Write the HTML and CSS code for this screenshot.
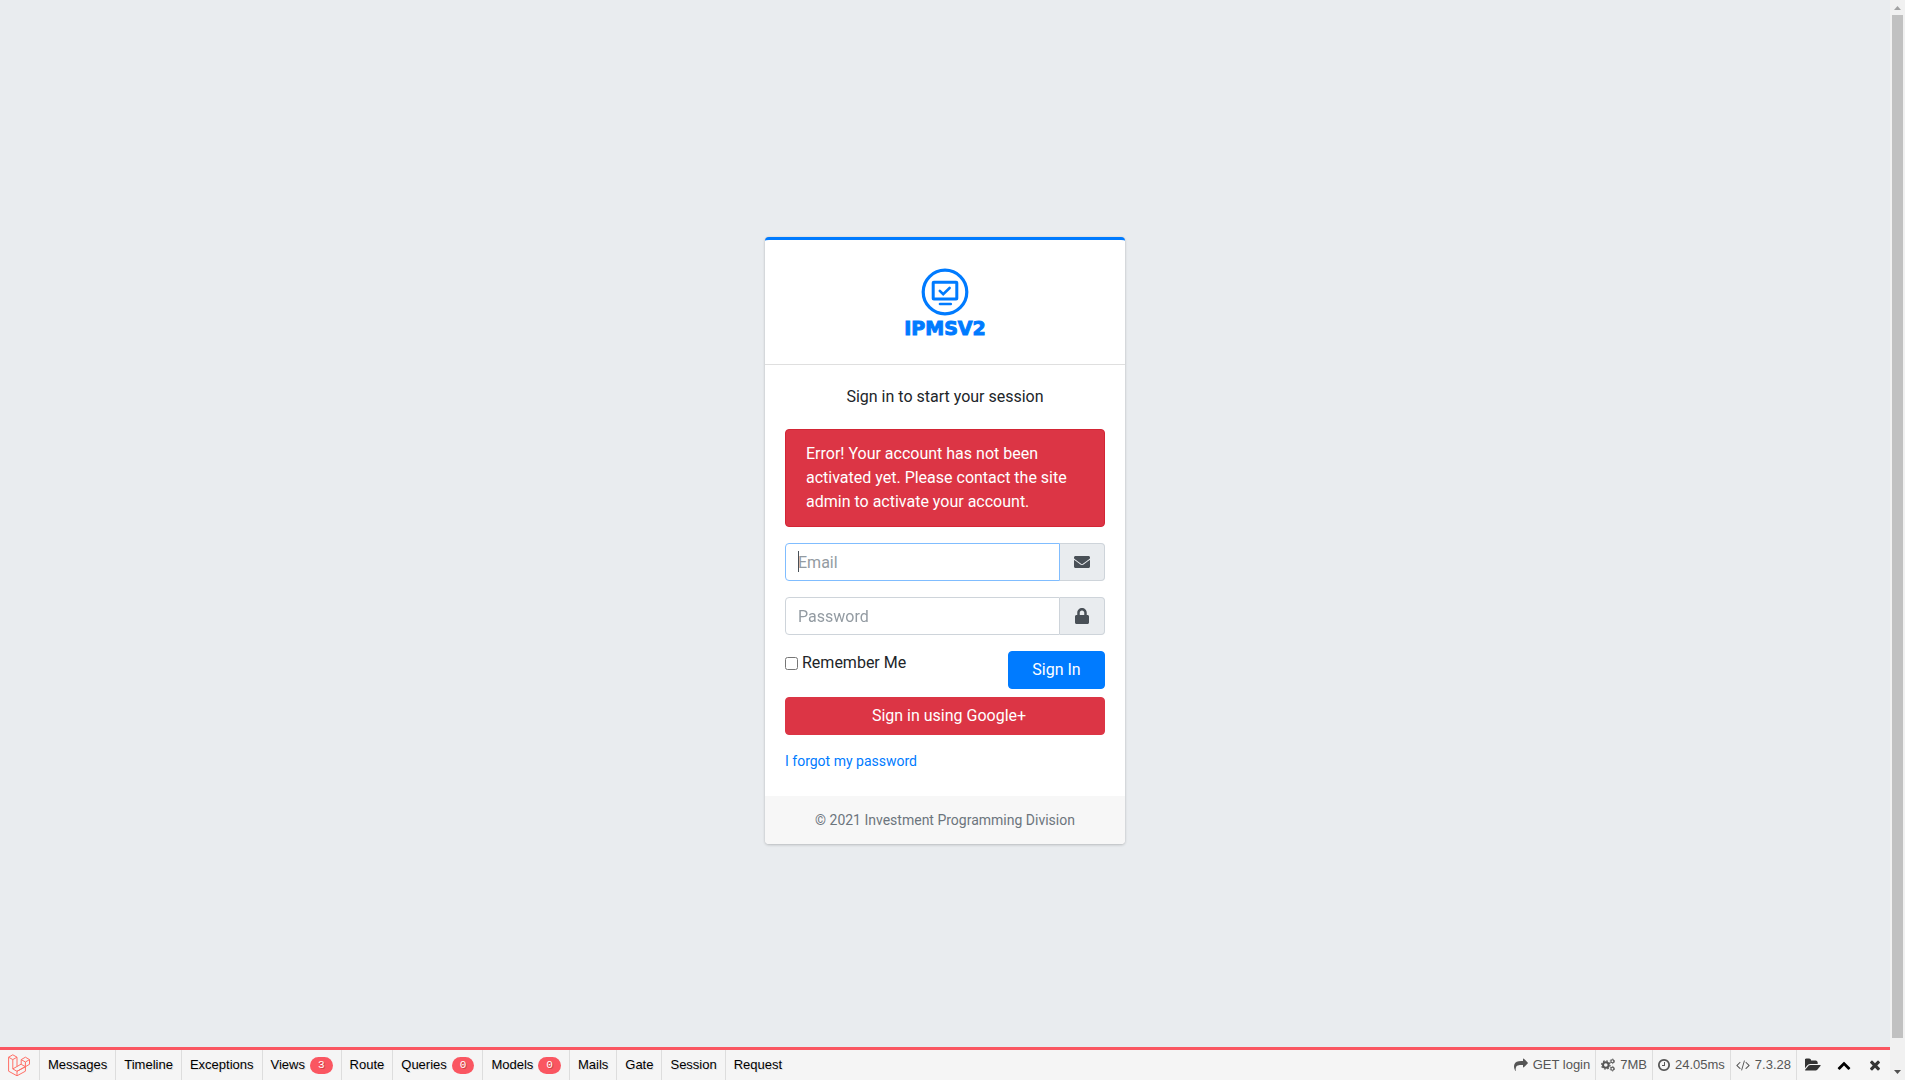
FILE: index.html
```html
<!DOCTYPE html>
<html lang="en">
<head>
<meta charset="utf-8">
<meta name="viewport" content="width=device-width, initial-scale=1">
<title>IPMSV2 | Log in</title>
<link rel="stylesheet" href="styles.css">
</head>
<body>
<div class="window">
  <div class="page">
    <main class="login-page">
      <section class="card">
        <header class="card-header">
          <svg class="logo" viewBox="0 0 48 48" fill="none" stroke="currentColor" aria-hidden="true">
            <circle cx="24" cy="24" r="21.800" stroke-width="3.200"/>
            <rect x="12.200" y="14.200" width="23.600" height="16.800" rx="0.600" stroke-width="3"/>
            <path d="M18.800 22.800l3.400 3.400 6.400-6.200" stroke-width="2.600" stroke-linecap="round"/>
            <path d="M19 36h10.800" stroke-width="2.600" stroke-linecap="round"/>
          </svg>
          <h1 class="brand">IPMSV2</h1>
        </header>
        <div class="card-body">
          <p class="intro">Sign in to start your session</p>
          <div class="alert" role="alert">Error! Your account has not been activated yet. Please contact the site admin to activate your account.</div>
          <form class="login-form">
            <div class="input-group input-group-active">
              <input class="form-control" type="email" placeholder="Email" aria-label="Email" autofocus>
              <span class="addon">
                <svg width="16" height="16" viewBox="0 0 512 512" fill="currentColor" aria-hidden="true"><path d="M502.300 190.800c3.900-3.100 9.700-.2 9.700 4.700V400c0 26.500-21.500 48-48 48H48c-26.500 0-48-21.500-48-48V195.600c0-5 5.700-7.800 9.700-4.700 22.400 17.400 52.100 39.500 154.100 113.600 21.100 15.400 56.700 47.800 92.200 47.600 35.700.3 72-32.800 92.300-47.600 102-74.100 131.600-96.300 154-113.700zM256 320c23.200.4 56.600-29.200 73.400-41.400 132.700-96.300 142.800-104.700 173.400-128.700 5.800-4.500 9.200-11.500 9.200-18.900v-19c0-26.500-21.500-48-48-48H48c-26.500 0-48 21.500-48 48v19c0 7.400 3.400 14.300 9.200 18.900 30.600 23.900 40.700 32.400 173.400 128.700 16.800 12.200 50.200 41.800 73.400 41.400z"/></svg>
              </span>
            </div>
            <div class="input-group">
              <input class="form-control" type="password" placeholder="Password" aria-label="Password">
              <span class="addon">
                <svg width="14" height="16" viewBox="0 0 448 512" fill="currentColor" aria-hidden="true"><path d="M400 224h-24v-72C376 68.200 307.800 0 224 0S72 68.200 72 152v72H48c-26.500 0-48 21.500-48 48v192c0 26.500 21.500 48 48 48h352c26.500 0 48-21.500 48-48V272c0-26.500-21.500-48-48-48zm-104 0H152v-72c0-39.700 32.300-72 72-72s72 32.300 72 72v72z"/></svg>
              </span>
            </div>
            <div class="actions">
              <label class="remember"><input type="checkbox">Remember Me</label>
              <button class="btn btn-primary" type="submit">Sign In</button>
            </div>
          </form>
          <a class="btn btn-danger" href="#google">Sign in using Google+</a>
          <a class="forgot" href="#forgot">I forgot my password</a>
        </div>
        <footer class="card-footer">© 2021 Investment Programming Division</footer>
      </section>
    </main>

    <nav class="debugbar" aria-label="Debug bar">
      <a class="tab tab-logo" href="#debugbar" aria-label="Laravel">
        <svg width="22" height="22" viewBox="0 0 22 22" fill="none" stroke="#ff6f66" stroke-width="1" stroke-linejoin="round" aria-hidden="true">
          <path d="M.6 3.200L4.800.8 9 3.200v9.300l4.200-2.400V5.600l4.200-2.400 4.100 2.400v4.700l-4.100 2.400v4.500l-8.400 4.600-8.400-4.600z"/>
          <path d="M.6 3.200l4.200 2.400L9 3.200M4.800 5.600v9.300L9 12.500M13.200 5.600L17.400 8l4.100-2.400M17.400 8v4.700M4.800 14.900l4.200 2.400 8.400-4.600-4.200-2.400M9 17.300v4.500M17.400 12.700L9 17.300"/>
        </svg>
      </a>
      <a class="tab" href="#messages">Messages</a>
      <a class="tab" href="#timeline">Timeline</a>
      <a class="tab" href="#exceptions">Exceptions</a>
      <a class="tab" href="#views">Views<span class="badge">3</span></a>
      <a class="tab" href="#route">Route</a>
      <a class="tab" href="#queries">Queries<span class="badge">0</span></a>
      <a class="tab" href="#models">Models<span class="badge">0</span></a>
      <a class="tab" href="#mails">Mails</a>
      <a class="tab" href="#gate">Gate</a>
      <a class="tab" href="#session">Session</a>
      <a class="tab tab-last" href="#request">Request</a>
      <span class="indicator indicator-first">
        <svg width="14" height="14" viewBox="0 0 1792 1792" fill="currentColor" aria-hidden="true"><path d="M1792 640q0 26-19 45l-512 512q-19 19-45 19t-45-19-19-45v-256h-224q-98 0-175.500 6t-154 21.500-133 42.500-105.500 69.500-80 101-48.500 138.500-17.500 181q0 55 5 123 0 6 2.500 23.500t2.500 26.500q0 15-8.500 25t-23.500 10q-16 0-28-17-7-9-13-22t-13.500-30-10.500-24q-127-285-127-451 0-199 53-333 162-403 875-403h224v-256q0-26 19-45t45-19 45 19l512 512q19 19 19 45z"/></svg>
        GET login
      </span>
      <span class="indicator">
        <svg width="14" height="14" viewBox="0 0 14 14" fill="none" stroke="currentColor" aria-hidden="true">
          <circle cx="4.800" cy="7" r="2.800" stroke-width="2"/>
          <circle cx="4.800" cy="7" r="4.200" stroke-width="1.200" stroke-dasharray="1.650 1.650"/>
          <circle cx="11.400" cy="3.300" r="1.500" stroke-width="1.100"/>
          <circle cx="11.400" cy="3.300" r="2.300" stroke-width="0.800" stroke-dasharray="1.200 1.200"/>
          <circle cx="11.400" cy="10.700" r="1.500" stroke-width="1.100"/>
          <circle cx="11.400" cy="10.700" r="2.300" stroke-width="0.800" stroke-dasharray="1.200 1.200"/>
        </svg>
        7MB
      </span>
      <span class="indicator">
        <svg width="12" height="14" viewBox="128 0 1536 1792" fill="currentColor" aria-hidden="true"><path d="M1024 544v448q0 14-9 23t-23 9h-320q-14 0-23-9t-9-23v-64q0-14 9-23t23-9h224v-352q0-14 9-23t23-9h64q14 0 23 9t9 23zm416 352q0-148-73-273t-198-198-273-73-273 73-198 198-73 273 73 273 198 198 273 73 273-73 198-198 73-273zm224 0q0 209-103 385.500t-279.500 279.500-385.500 103-385.500-103-279.500-279.500-103-385.500 103-385.500 279.500-279.500 385.500-103 385.500 103 279.500 279.500 103 385.500z"/></svg>
        24.05ms
      </span>
      <span class="indicator">
        <svg width="14" height="14" viewBox="64 0 1920 1792" fill="currentColor" aria-hidden="true"><path d="M681 1399l-50 50q-10 10-23 10t-23-10l-466-466q-10-10-10-23t10-23l466-466q10-10 23-10t23 10l50 50q10 10 10 23t-10 23l-393 393 393 393q10 10 10 23t-10 23zm591-1067l-373 1291q-4 13-15.500 19.500t-23.500 2.500l-62-17q-13-4-19.500-15.500t-2.500-24.500l373-1291q4-13 15.500-19.500t23.500-2.500l62 17q13 4 19.500 15.500t2.500 24.500zm657 651l-466 466q-10 10-23 10t-23-10l-50-50q-10-10-10-23t10-23l393-393-393-393q-10-10-10-23t10-23l50-50q10-10 23-10t23 10l466 466q10 10 10 23t-10 23z"/></svg>
        7.3.28
      </span>
      <div class="controls">
        <button class="control" type="button" aria-label="Open">
          <svg width="16" height="16" viewBox="0 0 1856 1792" fill="#333" aria-hidden="true"><path d="M1815 952q0 31-31 66l-336 396q-43 51-120.500 86.500t-143.500 35.500h-1088q-34 0-60.500-13t-26.500-43q0-31 31-66l336-396q43-51 120.500-86.500t143.500-35.500h1088q34 0 60.500 13t26.500 43zm-343-344v160h-832q-94 0-197 47.500t-164 119.500l-337 396-5 6q0-4-.5-12.500t-.5-12.500v-960q0-92 66-158t158-66h320q92 0 158 66t66 158v32h544q92 0 158 66t66 158z"/></svg>
        </button>
        <button class="control" type="button" aria-label="Expand">
          <svg width="14" height="14" viewBox="0 0 1792 1792" fill="#000" aria-hidden="true"><path d="M1683 1331l-166 165q-19 19-45 19t-45-19l-531-531-531 531q-19 19-45 19t-45-19l-166-165q-19-19-19-45.500t19-45.500l742-741q19-19 45-19t45 19l742 741q19 19 19 45.500t-19 45.500z"/></svg>
        </button>
        <button class="control" type="button" aria-label="Close">
          <svg width="12" height="12" viewBox="180 180 1432 1432" fill="#333" aria-hidden="true"><path d="M1490 1322q0 40-28 68l-136 136q-28 28-68 28t-68-28l-294-294-294 294q-28 28-68 28t-68-28l-136-136q-28-28-28-68t28-68l294-294-294-294q-28-28-28-68t28-68l136-136q28-28 68-28t68 28l294 294 294-294q28-28 68-28t68 28l136 136q28 28 28 68t-28 68l-294 294 294 294q28 28 28 68z"/></svg>
        </button>
      </div>
    </nav>
  </div>
  <div class="scrollbar" aria-hidden="true">
    <svg width="15" height="15" viewBox="0 0 15 15"><path d="M4 10h7L7.500 6z" fill="#a3a3a3"/></svg>
    <div class="thumb"></div>
    <svg width="15" height="15" viewBox="0 0 15 15"><path d="M4 5h7L7.500 9z" fill="#505050"/></svg>
  </div>
</div>
</body>
</html>
```
FILE: styles.css
```css
* { box-sizing: border-box; }

body {
  margin: 0;
  background: #e9ecef;
  color: #212529;
  font: 16px/24px Roboto, "Liberation Sans", sans-serif;
}

svg { display: block; flex: none; }
a { text-decoration: none; }

.window {
  display: grid;
  grid-template-columns: 1fr 15px;
}

/* Login card */
.login-page {
  min-height: 100vh;
  padding-top: 1px;
  display: flex;
  align-items: center;
  justify-content: center;
}

.card {
  width: 360px;
  background: #fff;
  border-top: 3px solid #007bff;
  border-radius: 4px;
  box-shadow: 0 0 1px rgba(0, 0, 0, .13), 0 1px 3px rgba(0, 0, 0, .2);
}

.card-header {
  display: flex;
  flex-direction: column;
  align-items: center;
  gap: 2px;
  padding: 28px 20px 26px;
  border-bottom: 1px solid rgba(0, 0, 0, .125);
  color: #007bff;
}

.logo { width: 48px; height: 48px; }

.brand {
  margin: 0;
  font: bold 19px/20px "DejaVu Sans", sans-serif;
  -webkit-text-stroke: 1px currentColor;
}

.card-body { padding: 20px; }

.intro {
  margin: 0 0 20px;
  text-align: center;
}

.alert {
  margin-bottom: 16px;
  padding: 12px 20px;
  border: 1px solid #d32535;
  border-radius: 4px;
  background: #dc3545;
  color: #fff;
}

.login-form {
  display: grid;
  gap: 16px;
  margin-bottom: 8px;
}

.input-group {
  position: relative;
  display: flex;
}

/* Text cursor over the empty active field */
.input-group-active::before {
  content: "";
  position: absolute;
  top: 8px;
  left: 13px;
  width: 1px;
  height: 21px;
  background: #495057;
}

.form-control {
  flex: 1;
  min-width: 0;
  height: 38px;
  padding: 6px 12px;
  border: 1px solid #ced4da;
  border-radius: 4px 0 0 4px;
  outline: 0;
  background: #fff;
  color: #495057;
  caret-color: transparent;
  font: inherit;
}

.form-control:focus { border-color: #80bdff; }
.form-control::placeholder { color: #939ba2; opacity: 1; }

.addon {
  display: flex;
  align-items: center;
  justify-content: center;
  width: 45px;
  border: 1px solid #ced4da;
  border-left: 0;
  border-radius: 0 4px 4px 0;
  background: #e9ecef;
  color: #495057;
}

.actions {
  display: flex;
  align-items: flex-start;
  justify-content: space-between;
}

.remember {
  display: flex;
  align-items: center;
  gap: 4px;
}

.remember input { width: 13px; height: 13px; margin: 0; }

.btn {
  display: block;
  padding: 6px 12px;
  border: 1px solid transparent;
  border-radius: 4px;
  color: #fff;
  font: inherit;
  text-align: center;
}

.btn-primary {
  width: 97px;
  background: #007bff;
  border-color: #007bff;
}

.btn-danger {
  padding-left: 20px;
  background: #dc3545;
  border-color: #dc3545;
}

.forgot {
  display: block;
  width: fit-content;
  margin: 16px 0 4px;
  color: #007bff;
  font-size: 14px;
  line-height: 21px;
}

.card-footer {
  padding: 12px 20px;
  border-radius: 0 0 4px 4px;
  background: #f7f7f7;
  color: #6c757d;
  font-size: 14px;
  text-align: center;
}

/* Debug bar, kept over the bottom edge of the page */
.debugbar {
  position: sticky;
  bottom: 0;
  display: flex;
  height: 33px;
  margin-top: -33px;
  border-top: 3px solid #fa5661;
  background: #f5f5f5;
  font: 13px/30px "Liberation Sans", Arial, sans-serif;
}

.tab {
  display: flex;
  align-items: center;
  padding: 0 8px;
  border-right: 1px solid #ddd;
  color: #000;
  text-shadow: 1px 1px #ddd;
}

.tab-logo { width: 40px; }
.tab-last { margin-right: auto; border-right: 0; }

.badge {
  margin-left: 5px;
  padding: 0 8px;
  border-radius: 9px;
  background: #fa5661;
  color: #fff;
  font: 11px/17px "Liberation Mono", monospace;
  text-shadow: 1px 1px #c44;
}

.indicator {
  display: flex;
  align-items: center;
  gap: 5px;
  padding: 0 5px;
  border-left: 1px solid #ddd;
  color: #555;
}

.indicator-first { border-left: 0; }

.controls {
  display: flex;
  border-left: 1px solid #ddd;
}

.control {
  display: flex;
  align-items: center;
  justify-content: center;
  width: 31px;
  padding: 0;
  border: 0;
  background: none;
}

/* Scroll track beside the page */
.scrollbar {
  display: flex;
  flex-direction: column;
  background: #f1f1f1;
}

.thumb {
  flex: 1;
  margin: 0 2px 27px;
  background: #c1c1c1;
}
```
